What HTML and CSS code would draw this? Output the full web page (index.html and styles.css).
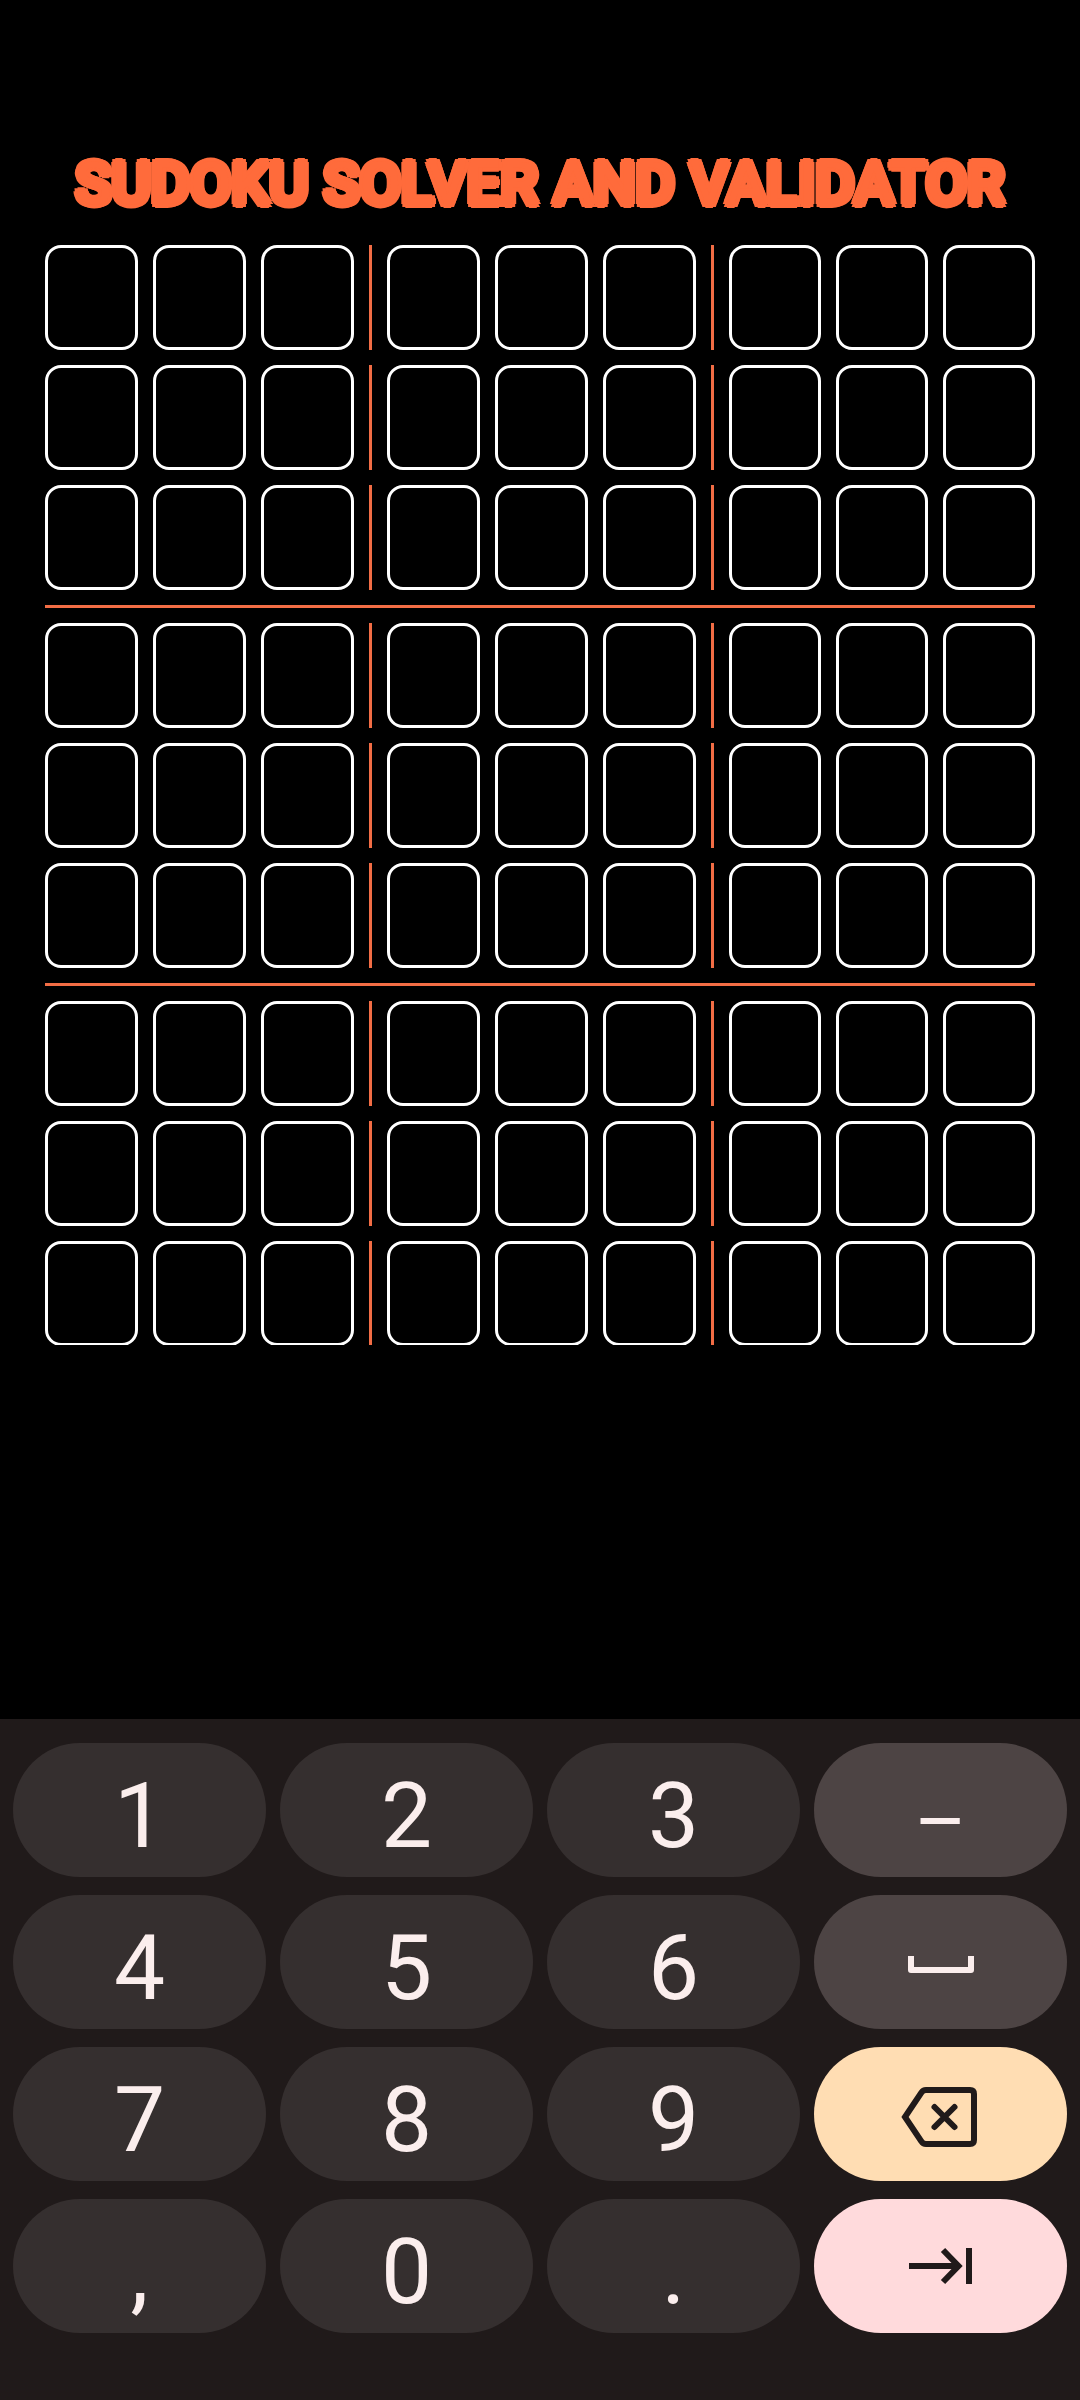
FILE: index.html
```html
<!DOCTYPE html>
<html lang="en">
<head>
  <meta charset="utf-8">
  <meta name="viewport" content="width=device-width, initial-scale=1">
  <title>Sudoku Solver and Validator</title>
  <link rel="stylesheet" href="styles.css">
</head>
<body>
  <main class="app">
    <h1 class="title">SUDOKU SOLVER AND VALIDATOR</h1>
    <form class="board" id="board" aria-label="Sudoku grid"></form>
  </main>

  <section class="keyboard" aria-label="Numeric keyboard">
    <button class="key" type="button">1</button>
    <button class="key" type="button">2</button>
    <button class="key" type="button">3</button>
    <button class="key key-side key-minus" type="button">–</button>
    <button class="key" type="button">4</button>
    <button class="key" type="button">5</button>
    <button class="key" type="button">6</button>
    <button class="key key-side key-icon" type="button" aria-label="Space">
      <svg class="icon" viewBox="0 0 80 80" stroke-linejoin="round"><path d="M10 34V48H70V34"/></svg>
    </button>
    <button class="key" type="button">7</button>
    <button class="key" type="button">8</button>
    <button class="key" type="button">9</button>
    <button class="key key-delete key-icon" type="button" aria-label="Backspace">
      <svg class="icon" viewBox="0 0 80 80"><path d="M4 43L20.500 18.500Q22 16 25 16H69Q73 16 73 20V66Q73 70 69 70H25Q22 70 20.500 67.500Z"/><path stroke-linecap="round" d="M33.500 33L53.500 53M53.500 33L33.500 53"/></svg>
    </button>
    <button class="key" type="button">,</button>
    <button class="key" type="button">0</button>
    <button class="key" type="button">.</button>
    <button class="key key-next key-icon" type="button" aria-label="Next">
      <svg class="icon" viewBox="0 0 80 80"><path d="M8 40H56M42 24L57.500 40L42 56M68 22V58"/></svg>
    </button>
  </section>
  <script src="board.js"></script>
</body>
</html>
```
FILE: board.js
```js
const board = document.getElementById("board");

function divider(className) {
  const line = document.createElement("span");
  line.className = className;
  return line;
}

for (let r = 1; r <= 9; r++) {
  const row = document.createElement("div");
  row.className = "row";
  for (let c = 1; c <= 9; c++) {
    const cell = document.createElement("input");
    cell.className = "cell";
    cell.type = "text";
    cell.inputMode = "numeric";
    cell.maxLength = 1;
    cell.setAttribute("aria-label", `Row ${r}, column ${c}`);
    row.append(cell);
    if (c === 3 || c === 6) row.append(divider("divider"));
  }
  board.append(row);
  if (r === 3 || r === 6) board.append(divider("divider divider-wide"));
}
```
FILE: styles.css
```css
* {
  box-sizing: border-box;
}

body {
  margin: 0;
  min-height: 100vh;
  display: flex;
  flex-direction: column;
  background: #000;
  font-family: Roboto, "Liberation Sans", sans-serif;
}

.app {
  padding: 144px 45px 0;
}

/* The shadows thicken the strokes and round their ends */
.title {
  margin: 0 0 21px;
  font-size: 60px;
  font-weight: 500;
  line-height: 80px;
  text-align: center;
  color: #ff6b3b;
  text-shadow:
    4px 0 #ff6b3b, -4px 0 #ff6b3b, 0 4px #ff6b3b, 0 -4px #ff6b3b,
    3px 3px #ff6b3b, -3px 3px #ff6b3b, 3px -3px #ff6b3b, -3px -3px #ff6b3b;
}

.board {
  display: flex;
  flex-direction: column;
  gap: 15px;
  max-height: 1100px;
  overflow: hidden;
}

.row {
  flex: none;
  display: grid;
  grid-template-columns: repeat(3, 93fr) 3px repeat(3, 93fr) 3px repeat(3, 92fr);
  gap: 15px;
}

.cell {
  width: 100%;
  min-width: 0;
  height: 105px;
  padding: 0;
  border: 3px solid #fff;
  border-radius: 16px;
  background: #000;
  color: #fff;
  font: inherit;
  font-size: 48px;
  text-align: center;
}

.divider {
  background: #f26d45;
}

.divider-wide {
  flex: none;
  height: 3px;
}

.keyboard {
  margin-top: auto;
  padding: 24px 13px 67px;
  display: grid;
  grid-template-columns: repeat(4, 1fr);
  grid-auto-rows: 134px;
  gap: 18px 14px;
  background: #201a1a;
}

.key {
  padding: 12px 0 0;
  border: 0;
  border-radius: 67px;
  background: #352f2f;
  color: #fbeeed;
  font-family: inherit;
  font-size: 91px;
  line-height: 108px;
}

.key-side {
  background: #4d4444;
}

.key-minus {
  padding-top: 24px;
  font-size: 80px;
}

.key-delete {
  background: #ffddb3;
  color: #201a1a;
}

.key-next {
  background: #ffdadc;
  color: #201a1a;
}

.key-icon {
  display: flex;
  align-items: center;
  justify-content: center;
  padding: 0;
}

.icon {
  width: 80px;
  height: 80px;
  fill: none;
  stroke: currentColor;
  stroke-width: 6;
}
```
